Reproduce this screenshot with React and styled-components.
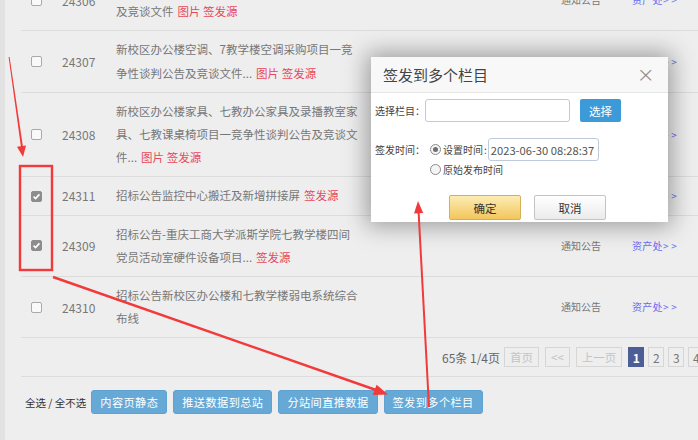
import React from "react";
import styled, { createGlobalStyle } from "styled-components";

const Global = createGlobalStyle`
  html, body { margin: 0; padding: 0; }
  body {
    background: #eeeeee;
    font-family: "Noto Sans CJK SC", "Noto Sans", sans-serif;
    overflow: hidden;
  }
`;

const Page = styled.div`
  position: relative;
  width: 698px;
  height: 440px;
  overflow: hidden;
  display: flex;
  background: #eeeeee;
`;

const SideStrip = styled.div`
  width: 5px;
  flex: none;
  background: #e2e2e2;
`;

const Main = styled.div`
  flex: 1;
  min-width: 0;
  padding-left: 16px;
`;

const List = styled.div`
  margin-top: -30px;
`;

const Row = styled.div`
  display: grid;
  grid-template-columns: 41px 54px 445px 71px 1fr;
  align-items: center;
  padding: 7px 0;
  border-bottom: 1px solid #dcdcdc;
  color: #777;
`;

const CheckCell = styled.div`
  padding-left: 10px;
  display: flex;
  align-items: center;
`;

const Box = styled.span`
  width: 11px;
  height: 11px;
  box-sizing: border-box;
  border-radius: 2px;
  border: 1px solid ${(p) => (p.$checked ? "#8d8d8d" : "#a9a9a9")};
  background: ${(p) => (p.$checked ? "#8d8d8d" : "#f9f9f9")};
  display: flex;
  align-items: center;
  justify-content: center;
`;

const Num = styled.div`
  font-size: 12px;
  line-height: 23.2px;
  color: #777;
`;

const Title = styled.div`
  max-width: 244px;
  font-size: 11.5px;
  line-height: 23.2px;
  color: #777;
`;

const Tag = styled.span`
  color: #e8485c;
  margin-left: 4px;
`;

const Category = styled.div`
  font-size: 10px;
  line-height: 14px;
  color: #777;
  white-space: nowrap;
`;

const Dept = styled.div`
  font-size: 10px;
  line-height: 14px;
  color: #6b6bf0;
  white-space: nowrap;
  letter-spacing: 0.3px;
`;

const PagerRow = styled.div`
  display: flex;
  align-items: center;
  padding: 9px 0 9px 421px;
  border-bottom: 1px solid #dcdcdc;
  white-space: nowrap;
`;

const PagerInfo = styled.span`
  font-size: 12px;
  color: #666;
  margin-right: 4px;
`;

const PageBtn = styled.span`
  height: 20px;
  box-sizing: border-box;
  display: inline-flex;
  align-items: center;
  justify-content: center;
  padding: ${(p) => (p.$num ? "0" : "0 5px")};
  width: ${(p) => (p.$num ? "16px" : "auto")};
  margin-right: ${(p) => (p.$num ? "4px" : "6px")};
  border: 1px solid ${(p) => (p.$active ? "#4c5d97" : "#d6d6d6")};
  background: ${(p) => (p.$active ? "#4c5d97" : "transparent")};
  color: ${(p) => (p.$active ? "#fff" : p.$num ? "#777" : "#c4c4c4")};
  font-size: ${(p) => (p.$num ? "12px" : "11.5px")};
  font-weight: ${(p) => (p.$active ? 700 : 400)};
  flex: none;
`;

const Toolbar = styled.div`
  display: flex;
  align-items: center;
  gap: 6px;
  padding: 13px 0 0 4px;
`;

const SelectAll = styled.span`
  font-size: 10.5px;
  color: #333;
  white-space: nowrap;
  margin-right: -1px;
`;

const ToolBtn = styled.span`
  height: 24px;
  box-sizing: border-box;
  display: inline-flex;
  align-items: center;
  padding: 0 8px;
  border-radius: 3px;
  background: #66a9d6;
  border: 1px solid #5fa2d0;
  color: #fff;
  font-size: 11.2px;
  letter-spacing: 0.4px;
  white-space: nowrap;
`;

/* ---------- Modal ---------- */
const Modal = styled.div`
  position: absolute;
  left: 371px;
  top: 57px;
  width: 297px;
  height: 165px;
  background: #fff;
  box-shadow: 0 0 22px 4px rgba(0, 0, 0, 0.35);
  overflow: hidden;
  z-index: 5;
`;

const ModalHeader = styled.div`
  height: 35px;
  display: flex;
  align-items: center;
  justify-content: space-between;
  padding: 0 13px 0 12px;
  background: #f8f8f8;
  border-bottom: 1px solid #e6e6e6;
`;

const ModalTitle = styled.span`
  font-size: 15px;
  color: #444;
`;

const ModalBody = styled.div`
  padding: 6px 4px 0;
  font-size: 10px;
  color: #444;
`;

const FieldRow = styled.div`
  display: flex;
  align-items: ${(p) => (p.$top ? "flex-start" : "center")};
  margin-top: ${(p) => p.$mt || 0}px;
`;

const Label = styled.span`
  width: ${(p) => p.$w}px;
  flex: none;
  line-height: 23px;
  white-space: nowrap;
`;

const Input = styled.div`
  width: ${(p) => p.$w}px;
  height: 23px;
  box-sizing: border-box;
  border: 1px solid #bfcbdc;
  border-radius: 3px;
  background: #fff;
  display: flex;
  align-items: center;
  padding-left: 2px;
  font-size: 11.2px;
  color: #555;
  flex: none;
`;

const BlueBtn = styled.span`
  margin-left: 10px;
  width: 41px;
  height: 23px;
  border-radius: 2px;
  background: #3c9ad8;
  color: #fff;
  font-size: 11.5px;
  display: inline-flex;
  align-items: center;
  justify-content: center;
`;

const RadioGroup = styled.div`
  display: flex;
  flex-direction: column;
`;

const RadioOption = styled.div`
  display: flex;
  align-items: center;
  height: ${(p) => (p.$tall ? 23 : 16)}px;
  font-size: 10px;
  color: #444;
  white-space: nowrap;
`;

const Radio = styled.span`
  width: 11px;
  height: 11px;
  box-sizing: border-box;
  border-radius: 50%;
  border: 1px solid #8a8a8a;
  background: #f5f5f5;
  margin-right: 2px;
  display: flex;
  align-items: center;
  justify-content: center;
  &::after {
    content: "";
    width: 5px;
    height: 5px;
    border-radius: 50%;
    background: ${(p) => (p.$checked ? "#6e6e6e" : "transparent")};
  }
`;

const Colon = styled.span`
  margin: 0 1px;
`;

const ModalFooter = styled.div`
  display: flex;
  gap: 13px;
  padding-left: 74px;
  margin-top: 18px;
`;

const OkBtn = styled.span`
  width: 72px;
  height: 25px;
  box-sizing: border-box;
  border: 1px solid #d3b15c;
  border-radius: 2px;
  background: linear-gradient(#fcecb4, #f3c65b);
  color: #333;
  font-size: 11.5px;
  display: inline-flex;
  align-items: center;
  justify-content: center;
`;

const CancelBtn = styled(OkBtn)`
  border-color: #c4c4c4;
  background: linear-gradient(#ffffff, #ebebeb);
`;

const Close = styled.span`
  font-size: 22px;
  line-height: 1;
  color: #8a8a8a;
  font-family: "DejaVu Sans", sans-serif;
  font-weight: 300;
`;

const Overlay = styled.svg`
  position: absolute;
  left: 0;
  top: 0;
  width: 698px;
  height: 440px;
  pointer-events: none;
  z-index: 10;
`;

const rows = [
  { id: "24306", text: "新校区七教学楼窗帘采购项目一竞争性谈判公告及竞谈文件", tags: ["图片", "签发源"] },
  { id: "24307", text: "新校区办公楼空调、7教学楼空调采购项目一竞争性谈判公告及竞谈文件...", tags: ["图片", "签发源"] },
  { id: "24308", text: "新校区办公楼家具、七教办公家具及录播教室家具、七教课桌椅项目一竞争性谈判公告及竞谈文件...", tags: ["图片", "签发源"] },
  { id: "24311", text: "招标公告监控中心搬迁及新增拼接屏", tags: ["签发源"], checked: true },
  { id: "24309", text: "招标公告-重庆工商大学派斯学院七教学楼四间党员活动室硬件设备项目...", tags: ["签发源"], checked: true },
  { id: "24310", text: "招标公告新校区办公楼和七教学楼弱电系统综合布线", tags: [] },
];

const Check = () => (
  <svg width="9" height="9" viewBox="0 0 9 9">
    <path d="M1.6 4.6 L3.6 6.6 L7.4 2.4" fill="none" stroke="#fff" strokeWidth="1.7" />
  </svg>
);

export default function App() {
  return (
    <>
      <Global />
      <Page>
        <SideStrip />
        <Main>
          <List>
            {rows.map((r) => (
              <Row key={r.id}>
                <CheckCell>
                  <Box $checked={r.checked}>{r.checked && <Check />}</Box>
                </CheckCell>
                <Num>{r.id}</Num>
                <Title>
                  {r.text}
                  {r.tags.length > 0 && <Tag>{r.tags.join(" ")}</Tag>}
                </Title>
                <Category>通知公告</Category>
                <Dept>资产处&gt; &gt;</Dept>
              </Row>
            ))}
            <PagerRow>
              <PagerInfo>65条 1/4页</PagerInfo>
              <PageBtn>首页</PageBtn>
              <PageBtn>&lt;&lt;</PageBtn>
              <PageBtn>上一页</PageBtn>
              <PageBtn $num $active>1</PageBtn>
              <PageBtn $num>2</PageBtn>
              <PageBtn $num>3</PageBtn>
              <PageBtn $num>4</PageBtn>
            </PagerRow>
          </List>
          <Toolbar>
            <SelectAll>全选 / 全不选</SelectAll>
            <ToolBtn>内容页静态</ToolBtn>
            <ToolBtn>推送数据到总站</ToolBtn>
            <ToolBtn>分站间直推数据</ToolBtn>
            <ToolBtn>签发到多个栏目</ToolBtn>
          </Toolbar>
        </Main>

        <Modal>
          <ModalHeader>
            <ModalTitle>签发到多个栏目</ModalTitle>
            <Close>×</Close>
          </ModalHeader>
          <ModalBody>
            <FieldRow>
              <Label $w={50}>选择栏目：</Label>
              <Input $w={145} />
              <BlueBtn>选择</BlueBtn>
            </FieldRow>
            <FieldRow $top $mt={16}>
              <Label $w={55}>签发时间：</Label>
              <RadioGroup>
                <RadioOption $tall>
                  <Radio $checked />
                  设置时间<Colon>:</Colon>
                  <Input $w={111}>2023-06-30 08:28:37</Input>
                </RadioOption>
                <RadioOption>
                  <Radio />
                  原始发布时间
                </RadioOption>
              </RadioGroup>
            </FieldRow>
            <ModalFooter>
              <OkBtn>确定</OkBtn>
              <CancelBtn>取消</CancelBtn>
            </ModalFooter>
          </ModalBody>
        </Modal>

        <Overlay viewBox="0 0 698 440">
          <rect x="20" y="166" width="32" height="104" fill="none" stroke="#f23a3a" strokeWidth="2.4" />
          <polygon points="8.6,57 9.6,57 23,147 21,147.3" fill="#f23a3a" />
          <polygon points="23,157 26,145.5 17,146.7" fill="#f23a3a" />
          <line x1="53" y1="277" x2="376" y2="390" stroke="#f23a3a" strokeWidth="2.4" />
          <polygon points="388,394.5 372.8,395 376.6,384.8" fill="#f23a3a" />
          <line x1="429" y1="407" x2="418.6" y2="212" stroke="#f23a3a" strokeWidth="2" />
          <polygon points="418,201 423.2,213 414,213.4" fill="#f23a3a" />
        </Overlay>
      </Page>
    </>
  );
}
